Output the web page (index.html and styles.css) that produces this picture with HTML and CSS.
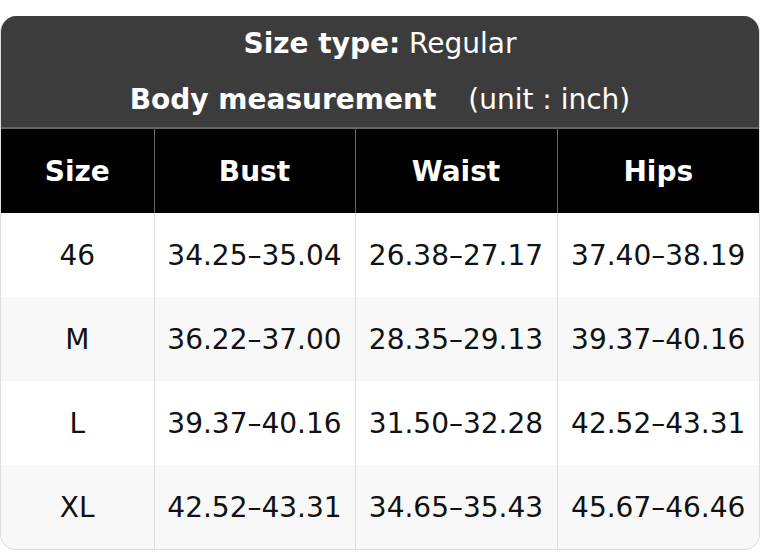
FILE: index.html
```html
<!DOCTYPE html>
<html>
<head>
<meta charset="utf-8">
<link rel="stylesheet" href="styles.css">
</head>
<body>
<div class="chart">
  <div class="title">
    <div class="title-line"><b>Size type:</b>&nbsp;Regular</div>
    <div class="title-line"><b>Body measurement</b><span class="unit">(unit : inch)</span></div>
  </div>
  <table class="sizes">
    <colgroup>
      <col class="c1"><col class="c2"><col class="c3"><col class="c4">
    </colgroup>
    <thead>
      <tr><th>Size</th><th>Bust</th><th>Waist</th><th>Hips</th></tr>
    </thead>
    <tbody>
      <tr><td>46</td><td>34.25–35.04</td><td>26.38–27.17</td><td>37.40–38.19</td></tr>
      <tr><td>M</td><td>36.22–37.00</td><td>28.35–29.13</td><td>39.37–40.16</td></tr>
      <tr><td>L</td><td>39.37–40.16</td><td>31.50–32.28</td><td>42.52–43.31</td></tr>
      <tr><td>XL</td><td>42.52–43.31</td><td>34.65–35.43</td><td>45.67–46.46</td></tr>
    </tbody>
  </table>
</div>
</body>
</html>
```
FILE: styles.css
```css
html, body {
  margin: 0;
  padding: 0;
  background: #ffffff;
}
body {
  font-family: "DejaVu Sans", "Liberation Sans", sans-serif;
}
.chart {
  margin-top: 16px;
  width: 760px;
  border-radius: 16px;
  overflow: hidden;
  border: 1px solid #dddddd;
  border-top: none;
  box-sizing: border-box;
}
.title {
  background: #3c3c3c;
  color: #ffffff;
  border-bottom: 2px solid #666666;
}
.title-line {
  height: 56px;
  line-height: 56px;
  text-align: center;
  font-size: 28px;
}
.title-line:last-child {
  height: 55px;
  line-height: 55px;
}
.unit {
  margin-left: 32px;
}
.sizes {
  width: 100%;
  border-collapse: collapse;
  table-layout: fixed;
}
.c1 { width: 153px; }
.c2 { width: 201px; }
.c3 { width: 202px; }
.c4 { width: 202px; }
.sizes th {
  background: #000000;
  color: #ffffff;
  font-size: 28px;
  font-weight: bold;
  height: 84px;
  padding: 0;
  border-left: 1px solid #666666;
}
.sizes th:first-child,
.sizes td:first-child {
  border-left: none;
}
.sizes td {
  height: 84px;
  padding: 0;
  text-align: center;
  font-size: 28px;
  color: #111111;
  border-left: 1px solid #dddddd;
}
.sizes tbody tr:nth-child(even) td {
  background: #f8f8f8;
}
```
